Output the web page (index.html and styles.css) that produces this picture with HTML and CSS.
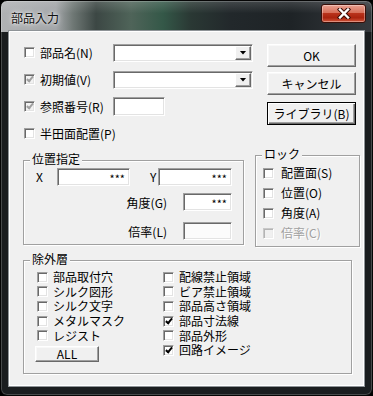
FILE: index.html
```html
<!DOCTYPE html>
<html>
<head>
    <meta charset="UTF-8">
    <title>部品入力</title>
    <link rel="stylesheet" href="styles.css">
</head>
<body>
<div class="window">
    <div class="titlebar">
        <span class="title">部品入力</span>
        <span class="close">
            <svg width="14" height="11" viewBox="0 0 14 11">
                <path d="M3 1.5 L11 9.5 M11 1.5 L3 9.5" stroke="#3a0d06" stroke-width="4.4" stroke-linecap="square"/>
                <path d="M3 1.5 L11 9.5 M11 1.5 L3 9.5" stroke="#fff" stroke-width="2.4" stroke-linecap="square"/>
            </svg>
        </span>
    </div>

    <div class="client">
        <div class="top">
            <div class="fields">
                <div class="row">
                    <label class="check"><span class="cb"></span>部品名(N)</label>
                    <div class="combo"><span class="drop"></span></div>
                </div>
                <div class="row">
                    <label class="check"><span class="cb on dim"></span>初期値(V)</label>
                    <div class="combo"><span class="drop"></span></div>
                </div>
                <div class="row">
                    <label class="check"><span class="cb on dim"></span>参照番号(R)</label>
                    <div class="tf ref"></div>
                </div>
                <div class="row">
                    <label class="check"><span class="cb"></span>半田面配置(P)</label>
                </div>
            </div>
            <div class="buttons">
                <div class="btn">OK</div>
                <div class="btn cancel">キャンセル</div>
                <div class="btn default">ライブラリ(B)</div>
            </div>
        </div>

        <div class="middle">
            <div class="group pos">
                <div class="group-title">位置指定</div>
                <div class="pos-r1">
                    <span class="axis">X</span>
                    <div class="tf x">***</div>
                    <span class="axis y">Y</span>
                    <div class="tf yv">***</div>
                </div>
                <div class="pos-r2">
                    <span class="plabel">角度(G)</span>
                    <div class="tf small">***</div>
                </div>
                <div class="pos-r2 last">
                    <span class="plabel">倍率(L)</span>
                    <div class="tf small blank"></div>
                </div>
            </div>

            <div class="group lock">
                <div class="group-title">ロック</div>
                <div class="lock-list">
                    <label class="lrow"><span class="cb"></span>配置面(S)</label>
                    <label class="lrow"><span class="cb"></span>位置(O)</label>
                    <label class="lrow"><span class="cb"></span>角度(A)</label>
                    <label class="lrow disabled"><span class="cb"></span>倍率(C)</label>
                </div>
            </div>
        </div>

        <div class="group layers">
            <div class="group-title">除外層</div>
            <div class="cols">
                <div class="col first">
                    <label class="xrow"><span class="cb"></span>部品取付穴</label>
                    <label class="xrow"><span class="cb"></span>シルク図形</label>
                    <label class="xrow"><span class="cb"></span>シルク文字</label>
                    <label class="xrow"><span class="cb"></span>メタルマスク</label>
                    <label class="xrow"><span class="cb"></span>レジスト</label>
                    <div class="btn all">ALL</div>
                </div>
                <div class="col">
                    <label class="xrow"><span class="cb"></span>配線禁止領域</label>
                    <label class="xrow"><span class="cb"></span>ビア禁止領域</label>
                    <label class="xrow"><span class="cb"></span>部品高さ領域</label>
                    <label class="xrow"><span class="cb on"></span>部品寸法線</label>
                    <label class="xrow"><span class="cb"></span>部品外形</label>
                    <label class="xrow"><span class="cb on"></span>回路イメージ</label>
                </div>
            </div>
        </div>
    </div>
</div>
</body>
</html>
```

FILE: styles.css
```css
html, body {
    margin: 0;
    padding: 0;
    background: #000;
}
body {
    font-family: "Noto Sans CJK JP", "Noto Sans", sans-serif;
    font-size: 12px;
    line-height: 14px;
    color: #000;
}
.window {
    width: 373px;
    height: 396px;
    box-sizing: border-box;
    padding: 0 8px 9px;
    border: 1px solid #050505;
    border-radius: 7px;
    background:
        linear-gradient(to bottom, rgba(255,255,255,0.15), rgba(255,255,255,0) 40%) top left / 100% 31px no-repeat,
        linear-gradient(to right, #b0b2b4 0, #a2a5a8 55px, #6f7875 72px, #3c4744 95px, #4f6459 130px, #345848 162px, #2a3834 190px, #22282b 230px, #1e2326 290px, #2a2e32 330px, #35393d 371px) top left / 100% 31px no-repeat,
        #1a1d1f;
    box-shadow: inset 0 0 0 1px rgba(255,255,255,0.2);
}

/* title bar */
.titlebar {
    height: 30px;
    margin: 0 -8px;
    display: flex;
    justify-content: space-between;
    align-items: flex-start;
}
.title {
    padding: 10px 0 0 10px;
    color: #111;
    text-shadow: 0 0 6px #fff, 0 0 3px rgba(255,255,255,0.8);
}
.close {
    margin: 3px 6px 0 0;
    width: 45px;
    height: 19px;
    box-sizing: border-box;
    border: 1px solid #3b0e07;
    border-radius: 3px;
    background: linear-gradient(to bottom, #e8a090 0, #d7705a 45%, #b8321b 50%, #a9230e 75%, #d2573c 100%);
    box-shadow: inset 0 0 0 1px rgba(255,255,255,0.35);
    display: flex;
    align-items: center;
    justify-content: center;
}

/* client area */
.client {
    height: 355px;
    background: #f0f0f0;
    box-shadow: 0 0 0 1px #8e9397, inset 0 0 0 1px #fff;
}
.top {
    display: flex;
    padding: 8px 0 0 15px;
}
.fields {
    width: 229px;
}
.row {
    height: 27px;
    display: flex;
    align-items: center;
}
.check {
    width: 89px;
    display: flex;
    align-items: center;
    gap: 5px;
    white-space: nowrap;
}

/* checkbox */
.cb {
    position: relative;
    flex: none;
    width: 11px;
    height: 11px;
    box-sizing: border-box;
    border: 1px solid;
    border-color: #a0a0a0 #fff #fff #a0a0a0;
    box-shadow: inset 1px 1px 0 #696969, inset -1px -1px 0 #e3e3e3;
    background: #fff;
}
.cb.on::after {
    content: "";
    position: absolute;
    left: 3px;
    top: 0px;
    width: 2px;
    height: 5px;
    border: solid #000;
    border-width: 0 2px 2px 0;
    transform: rotate(40deg);
}
.cb.dim {
    background: #f2f2f2;
}
.cb.dim::after {
    border-color: #a0a0a0;
}

/* inputs */
.tf, .combo {
    box-sizing: border-box;
    border: 1px solid;
    border-color: #a0a0a0 #fff #fff #a0a0a0;
    box-shadow: inset 1px 1px 0 #696969, inset -1px -1px 0 #e3e3e3;
    background: #fff;
}
.combo {
    width: 140px;
    height: 18px;
    display: flex;
    justify-content: flex-end;
    padding: 1px;
}
.drop {
    width: 16px;
    box-sizing: border-box;
    border: 1px solid;
    border-color: #fff #696969 #696969 #fff;
    box-shadow: inset -1px -1px 0 #a0a0a0;
    background: #f0f0f0;
    display: flex;
    align-items: center;
    justify-content: center;
}
.drop::after {
    content: "";
    width: 7px;
    height: 4px;
    background: #000;
    clip-path: polygon(0 0, 100% 0, 50% 100%);
}
.tf {
    height: 18px;
    text-align: right;
    padding-right: 4px;
    font-size: 11px;
    line-height: 18px;
}
.tf.ref {
    width: 52px;
    height: 19px;
}

/* buttons */
.buttons {
    margin-left: 14px;
    padding-top: 5px;
    width: 89px;
    display: flex;
    flex-direction: column;
}
.btn {
    height: 23px;
    box-sizing: border-box;
    border: 1px solid;
    border-color: #fff #696969 #696969 #fff;
    box-shadow: inset -1px -1px 0 #a0a0a0, inset 1px 1px 0 #f8f8f8;
    background: #f0f0f0;
    display: flex;
    align-items: center;
    justify-content: center;
    white-space: nowrap;
}
.btn.cancel {
    margin-top: 5px;
}
.btn.default {
    margin-top: 7px;
    border-color: #000;
    box-shadow: inset 1px 1px 0 #fff, inset -1px -1px 0 #696969, inset -2px -2px 0 #a0a0a0;
}

/* group boxes */
.middle {
    display: flex;
    align-items: flex-start;
    padding-left: 14px;
}
.group {
    box-sizing: border-box;
    border: 1px solid #a0a0a0;
    box-shadow: inset 1px 1px 0 #fff, 1px 1px 0 #fff;
}
.group-title {
    margin: -9px 0 0 6px;
    padding: 0 2px;
    width: max-content;
    background: #f0f0f0;
}
.pos {
    margin-top: 13px;
    width: 221px;
    height: 85px;
}
.pos-r1 {
    margin-top: 2px;
    height: 18px;
    padding-left: 12px;
    display: flex;
    align-items: center;
}
.axis {
    width: 21px;
}
.axis.y {
    width: 8px;
    margin-left: 20px;
}
.tf.x {
    width: 73px;
}
.tf.yv {
    width: 74px;
}
.pos-r2 {
    margin-top: 7px;
    height: 18px;
    padding-right: 11px;
    display: flex;
    justify-content: flex-end;
    align-items: center;
}
.pos-r2.last {
    margin-top: 11px;
}
.plabel {
    margin-right: 16px;
    padding-top: 2px;
}
.tf.small {
    width: 49px;
}
.tf.blank {
    background: #fbfbfb;
}

.lock {
    margin: 8px 0 0 11px;
    width: 105px;
    height: 92px;
}
.lock-list {
    margin-top: 2px;
    padding-left: 7px;
}
.lrow {
    height: 20px;
    display: flex;
    align-items: center;
    gap: 7px;
}
.lrow.disabled {
    color: #a0a0a0;
    text-shadow: 1px 1px 0 #fff;
}
.lrow.disabled .cb {
    border-color: #c8c8c8 #fff #fff #c8c8c8;
    box-shadow: inset 1px 1px 0 #b4b4b4, inset -1px -1px 0 #ececec;
    background: #f0f0f0;
}

.layers {
    margin: 13px 0 0 14px;
    width: 329px;
    height: 114px;
}
.cols {
    display: flex;
    padding: 4px 0 0 13px;
}
.col.first {
    width: 126px;
}
.xrow {
    height: 14.6px;
    display: flex;
    align-items: center;
    gap: 5px;
    white-space: nowrap;
}
.btn.all {
    margin: 3px 0 0 -2px;
    width: 64px;
    height: 16px;
}
```
